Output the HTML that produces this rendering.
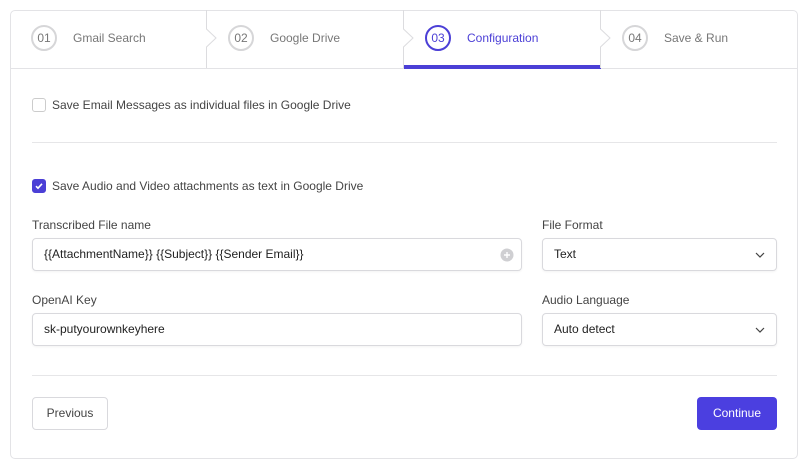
<!DOCTYPE html>
<html><head><style>
*{box-sizing:border-box;margin:0;padding:0}
body{width:807px;height:467px;background:#fff;font-family:"Liberation Sans",sans-serif;font-size:12px;color:#3a3a3a;position:relative;overflow:hidden}
.card{position:absolute;left:10px;top:10px;width:788px;height:449px;box-shadow:inset 0 0 0 1px #e3e3e6;border-radius:5px}
.tabs{position:absolute;left:0;top:0;width:788px;height:59px;border-bottom:1px solid #e3e3e6}
.tab{position:absolute;top:0;height:58px;width:197px}
.tab .c{position:absolute;left:21px;top:15px;width:26px;height:26px;border:2px solid #d6d6d8;border-radius:50%;text-align:center;line-height:22px;font-size:12px;color:#777}
.tab .t{position:absolute;left:63px;top:21px;font-size:12px;color:#777}
.tab.a .c{border-color:#4b3fd6;color:#4b3fd6}
.tab.a .t{color:#4b3fd6}
.tab.a:after{content:"";position:absolute;left:0;right:0;bottom:-1px;height:4px;background:#4b3fd6}
.sep{position:absolute;top:0;width:12px;height:58px}
.abs{position:absolute}
.cb{position:absolute;width:14px;height:14px;border:1px solid #ccc;border-radius:3px}
.inp{position:absolute;height:33px;border:1px solid #d9d9dd;border-radius:4px;padding-left:11px;line-height:31px;font-size:12px;color:#222;box-shadow:0 1px 2px rgba(0,0,0,.05)}
.lbl{position:absolute;font-size:12px;color:#444}
.hr{position:absolute;left:22px;width:745px;height:1px;background:#e6e6e8}
</style></head><body>
<div class="card">
 <div class="tabs">
  <div class="tab" style="left:0"><div class="c">01</div><div class="t">Gmail Search</div></div>
  <div class="tab" style="left:197px"><div class="c">02</div><div class="t">Google Drive</div></div>
  <div class="tab a" style="left:394px"><div class="c">03</div><div class="t">Configuration</div></div>
  <div class="tab" style="left:591px"><div class="c">04</div><div class="t">Save &amp; Run</div></div>
  <svg class="sep" style="left:196px" viewBox="0 0 12 58"><path d="M0.5 0V19L10 28L0.5 37V58" fill="#fff" stroke="#dcdcdf"/></svg>
  <svg class="sep" style="left:393px" viewBox="0 0 12 58"><path d="M0.5 0V19L10 28L0.5 37V58" fill="#fff" stroke="#dcdcdf"/></svg>
  <svg class="sep" style="left:590px" viewBox="0 0 12 58"><path d="M0.5 0V19L10 28L0.5 37V58" fill="#fff" stroke="#dcdcdf"/></svg>
 </div>
 <div class="cb" style="left:22px;top:88px"></div>
 <div class="lbl" style="left:42px;top:88px">Save Email Messages as individual files in Google Drive</div>
 <div class="hr" style="top:132px"></div>
 <div class="cb" style="left:22px;top:169px;background:#4b3fd6;border-color:#4b3fd6"><svg width="12" height="12" viewBox="0 0 12 12" style="position:absolute;left:0;top:0"><path d="M3 6.2L5 8.2L9 3.8" fill="none" stroke="#fff" stroke-width="1.6"/></svg></div>
 <div class="lbl" style="left:42px;top:169px">Save Audio and Video attachments as text in Google Drive</div>
 <div class="lbl" style="left:22px;top:208px">Transcribed File name</div>
 <div class="inp" style="left:22px;top:228px;width:490px">{{AttachmentName}} {{Subject}} {{Sender Email}}
  <svg width="14" height="14" viewBox="0 0 14 14" style="position:absolute;right:7px;top:9px"><circle cx="7" cy="7" r="6.5" fill="#cfcfd2"/><path d="M7 4v6M4 7h6" stroke="#fff" stroke-width="1.4"/></svg></div>
 <div class="lbl" style="left:532px;top:208px">File Format</div>
 <div class="inp" style="left:532px;top:228px;width:235px">Text
  <svg width="10" height="6" viewBox="0 0 10 6" style="position:absolute;right:11px;top:13px"><path d="M1 1L5 5L9 1" fill="none" stroke="#444" stroke-width="1.2"/></svg></div>
 <div class="lbl" style="left:22px;top:283px">OpenAI Key</div>
 <div class="inp" style="left:22px;top:303px;width:490px">sk-putyourownkeyhere</div>
 <div class="lbl" style="left:532px;top:283px">Audio Language</div>
 <div class="inp" style="left:532px;top:303px;width:235px">Auto detect
  <svg width="10" height="6" viewBox="0 0 10 6" style="position:absolute;right:11px;top:13px"><path d="M1 1L5 5L9 1" fill="none" stroke="#444" stroke-width="1.2"/></svg></div>
 <div class="hr" style="top:365px"></div>
 <div class="abs" style="left:22px;top:387px;width:76px;height:33px;border:1px solid #d9d9dd;border-radius:4px;text-align:center;line-height:31px;color:#444">Previous</div>
 <div class="abs" style="left:687px;top:387px;width:80px;height:33px;background:#4b3fe0;border-radius:4px;text-align:center;line-height:33px;color:#fff">Continue</div>
</div>
</body></html>
